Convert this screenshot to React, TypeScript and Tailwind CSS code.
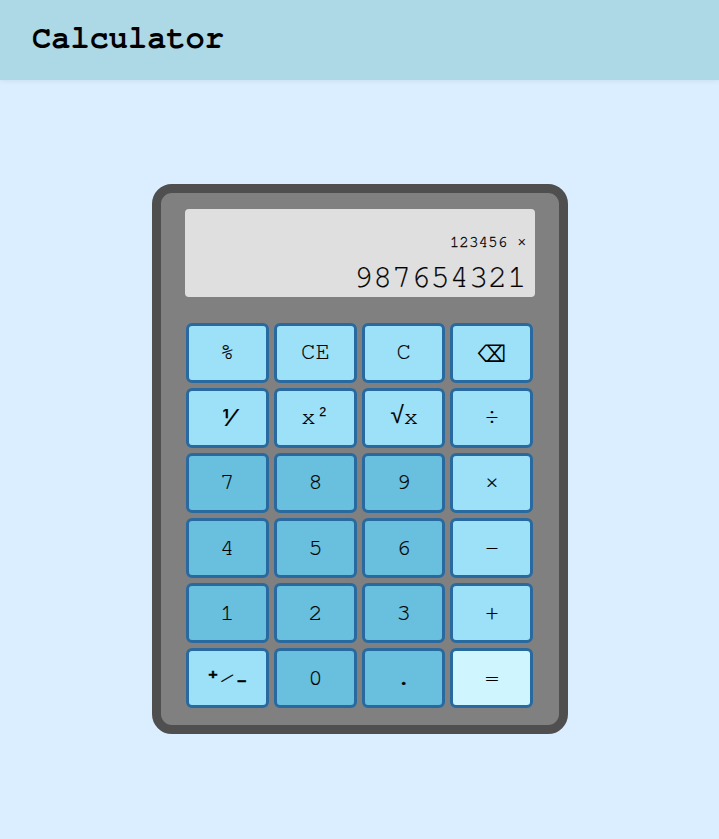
import React from "react";

type Kind = "op" | "num" | "eq";
const mono = "font-['DejaVu_Sans_Mono'] font-bold [-webkit-text-stroke:0.4px_black]";
const keys: [React.ReactNode, Kind][] = [
  ["%", "op"],
  ["CE", "op"],
  ["C", "op"],
  [<span className="scale-y-115 pt-1 font-['DejaVu_Sans'] text-[20px] leading-6 [-webkit-text-stroke:0px]">⌫</span>, "op"],
  [<span className="scale-x-110 pl-[3px] pt-px font-['Inter'] text-[22.5px] leading-6">⅟</span>, "op"],
  [<>x<span className="w-[14px] text-center font-['Liberation_Mono'] text-[20px] [-webkit-text-stroke:0px]">²</span></>, "op"],
  [<><span className="translate-x-px font-['Liberation_Mono']">√</span>x</>, "op"],
  ["÷", "op"],
  ["7", "num"], ["8", "num"], ["9", "num"], ["×", "op"],
  ["4", "num"], ["5", "num"], ["6", "num"], ["−", "op"],
  ["1", "num"], ["2", "num"], ["3", "num"], ["+", "op"],
  [<><span className={mono}>⁺</span>⁄<span className={mono}>₋</span></>, "op"],
  ["0", "num"], [".", "num"], ["=", "eq"],
];
const fills: Record<Kind, string> = {
  op: "bg-[#9de1f9]",
  num: "bg-[#68bfde]",
  eq: "bg-[#cff5ff]",
};

export default function App() {
  return (
    <div className="flex h-[839px] flex-col bg-[#dbeeff] font-['FreeMono','Liberation_Mono',monospace] text-black">
      <header className="flex h-20 shrink-0 items-center bg-[#add8e6] px-8 pb-[4px] shadow-[0_0_6px_rgba(0,0,0,0.1)]">
        <h1 className="text-[32px] font-bold leading-[36px]">Calculator</h1>
      </header>
      <main className="flex flex-1 items-start justify-center pt-[104px]">
        <div className="h-[550px] w-[416px] rounded-[20px] border-[9px] border-[#4f4f4f] bg-[#808080] px-6 pt-4">
          <div className="flex h-[88px] flex-col items-end rounded bg-[#dfdfdf] pr-2 pt-6">
            <div className="text-base leading-[18px] [-webkit-text-stroke:0.3px_black]">123456 ×</div>
            <div className="mt-2 text-[32px] leading-[36px] [-webkit-text-stroke:0.2px_black]">987654321</div>
          </div>
          <div className="mt-[25.7px] grid grid-cols-[repeat(4,82.8px)] gap-x-[5.4px] gap-y-[5.1px] pl-[1.4px]">
            {keys.map(([label, kind], i) => (
              <button key={i} className={`flex h-[60px] items-center justify-center rounded-md border-[3px] border-[#286aa0] pb-[0.9px] text-2xl [-webkit-text-stroke:0.2px_black] ${fills[kind]}`}>{label}</button>
            ))}
          </div>
        </div>
      </main>
    </div>
  );
}
